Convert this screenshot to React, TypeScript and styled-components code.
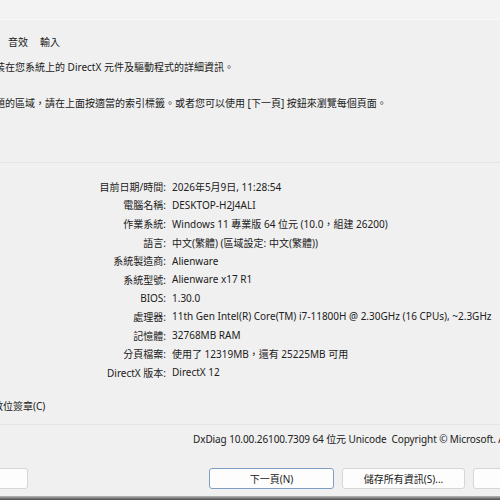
import styled, { createGlobalStyle } from "styled-components";

const GlobalStyle = createGlobalStyle`
  html, body {
    margin: 0;
    padding: 0;
    height: 500px;
    overflow: hidden;
    background: #f0f0f0;
  }
  body {
    font-family: "Noto Sans", "Noto Sans CJK TC", sans-serif;
    font-size: 10px;
    color: #202020;
  }
`;

const Window = styled.div`
  width: 720px;
  height: 496px;
  margin-left: -110px;
  display: flex;
  flex-direction: column;
  background: #f0f0f0;
`;

const TitleBar = styled.div`
  height: 20px;
  background: #f3f3f3;
  border-bottom: 1px solid #f8f8f8;
  box-sizing: border-box;
`;

const Tabs = styled.div`
  display: flex;
  margin: 13px 0 0 16px;
  height: 18px;
`;

const Tab = styled.div<{ $active?: boolean }>`
  padding: 0 6px;
  line-height: 18px;
  background: ${p => (p.$active ? "#f9f9f9" : "transparent")};
  border-radius: 3px 3px 0 0;
`;

const Intro = styled.p<{ $gap: number }>`
  margin: ${p => p.$gap}px 0 0 35px;
  line-height: 16px;
  white-space: nowrap;
`;

const Group = styled.div`
  margin-top: 51px;
  border-top: 1px solid #e4e4e4;
  padding-top: 14px;
  display: grid;
  grid-template-columns: 276px 1fr;
  column-gap: 6px;
  grid-auto-rows: 18.6px;
  align-items: center;
`;

const Label = styled.span`
  text-align: right;
  white-space: nowrap;
`;

const Value = styled.span`
  white-space: nowrap;
`;

const CheckRow = styled.label`
  display: flex;
  align-items: center;
  gap: 6px;
  margin: 16px 0 0 29px;
  line-height: 16px;
`;

const Box = styled.span`
  width: 11px;
  height: 11px;
  border: 1px solid #8a8a8a;
  border-radius: 2px;
  background: #fbfbfb;
`;

const Separator = styled.div`
  margin-top: 10px;
  border-top: 1px solid #e4e4e4;
`;

const Footer = styled.div`
  margin: 6px 0 0 303px;
  line-height: 16px;
  white-space: nowrap;
  letter-spacing: -0.1px;
`;

const ButtonRow = styled.div`
  display: flex;
  margin-top: 21px;
  padding-right: 14px;
`;

const ButtonGroup = styled.div`
  display: flex;
  gap: 8px;
  margin-left: auto;
`;

const Button = styled.button<{ $width: number; $primary?: boolean }>`
  width: ${p => p.$width}px;
  height: 21px;
  flex: none;
  padding: 0;
  font: inherit;
  color: #202020;
  background: #fdfdfd;
  border: 1px solid ${p => (p.$primary ? "#7f9fc2" : "#d6d6d6")};
  border-radius: 3px;
`;

const Shadow = styled.div`
  height: 4px;
  background: linear-gradient(#b8b8b8, #4a4a4a);
`;

const info: [string, string][] = [
  ["目前日期/時間:", "2026年5月9日, 11:28:54"],
  ["電腦名稱:", "DESKTOP-H2J4ALI"],
  ["作業系統:", "Windows 11 專業版 64 位元 (10.0，組建 26200)"],
  ["語言:", "中文(繁體) (區域設定: 中文(繁體))"],
  ["系統製造商:", "Alienware"],
  ["系統型號:", "Alienware x17 R1"],
  ["BIOS:", "1.30.0"],
  ["處理器:", "11th Gen Intel(R) Core(TM) i7-11800H @ 2.30GHz (16 CPUs), ~2.3GHz"],
  ["記憶體:", "32768MB RAM"],
  ["分頁檔案:", "使用了 12319MB，還有 25225MB 可用"],
  ["DirectX 版本:", "DirectX 12"],
];

const tabs = ["系統", "顯示", "轉譯", "音效", "輸入"];

export default function App() {
  return (
    <>
      <GlobalStyle />
      <Window>
        <TitleBar />
        <Tabs>
          {tabs.map((t, i) => (
            <Tab key={t} $active={i === 0}>{t}</Tab>
          ))}
        </Tabs>
        <Intro $gap={8}>此工具會報告安裝在您系統上的 DirectX 元件及驅動程式的詳細資訊。</Intro>
        <Intro $gap={20}>如果您知道出問題的區域，請在上面按適當的索引標籤。或者您可以使用 [下一頁] 按鈕來瀏覽每個頁面。</Intro>
        <Group>
          {info.map(([k, v]) => [
            <Label key={k}>{k}</Label>,
            <Value key={k + "v"}>{v}</Value>,
          ])}
        </Group>
        <CheckRow>
          <Box />
          檢查 WHQL 數位簽章(C)
        </CheckRow>
        <Separator />
        <Footer>DxDiag 10.00.26100.7309 64 位元 Unicode&nbsp; Copyright © Microsoft. All rights reserved.</Footer>
        <ButtonRow>
          <Button $width={138}>說明(H)</Button>
          <ButtonGroup>
            <Button $width={125} $primary>下一頁(N)</Button>
            <Button $width={123}>儲存所有資訊(S)...</Button>
            <Button $width={123}>結束(X)</Button>
          </ButtonGroup>
        </ButtonRow>
      </Window>
      <Shadow />
    </>
  );
}
